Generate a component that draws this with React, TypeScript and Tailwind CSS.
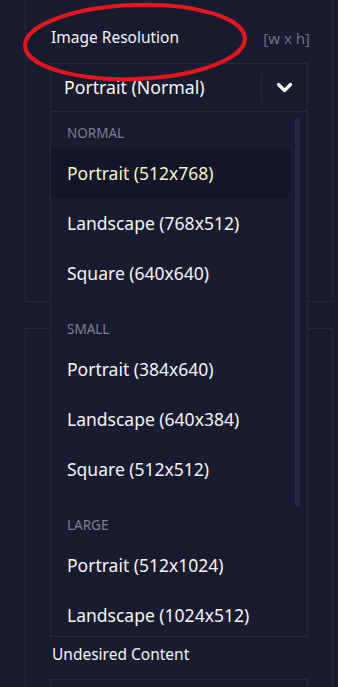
import React from "react";

const groups = [
  { label: "NORMAL", items: ["Portrait (512x768)", "Landscape (768x512)", "Square (640x640)"] },
  { label: "SMALL", items: ["Portrait (384x640)", "Landscape (640x384)", "Square (512x512)"] },
  { label: "LARGE", items: ["Portrait (512x1024)", "Landscape (1024x512)"] },
];

export default function App() {
  return (
    <div
      className="relative w-[338px] h-[687px] overflow-hidden bg-[#191b31] text-white"
      style={{ fontFamily: '"Noto Sans", sans-serif' }}
    >
      {/* Box 1 */}
      <div className="ml-[25px] w-[308px] h-[302px] border-x border-b border-[#262940] px-[24px] pt-[26px]">
        <div className="flex items-center justify-between h-[24px]">
          <span className="text-[15.5px] text-[#f4f4f4] pl-[1px]">Image Resolution</span>
          <span className="text-[15px] text-[#6f7184] -mr-[2px]">[w x h]</span>
        </div>
        <div className="mt-[13px] h-[49px] border border-[#262940] flex items-center">
          <span className="flex-1 pl-[13px] text-[17.7px] text-[#f4f4f4]">Portrait (Normal)</span>
          <div className="w-[1px] h-[27px] bg-[#262940]" />
          <div className="w-[45px] flex items-center justify-center">
            <svg width="17" height="11" viewBox="0 0 17 11">
              <polyline points="2.5,2.5 8.5,8.5 14.5,2.5" fill="none" stroke="#ffffff" strokeWidth="3.2" strokeLinecap="round" strokeLinejoin="round" />
            </svg>
          </div>
        </div>
      </div>

      {/* Box 2 */}
      <div className="mt-[26px] ml-[25px] w-[308px] h-[400px] border-x border-t border-[#262940] px-[24px]">
        <div className="h-[316px]" />
        <div className="h-[20px] flex items-center text-[15.5px] text-[#f4f4f4] pl-[2px]">Undesired Content</div>
        <div className="mt-[14px] h-[60px] border border-[#262940]" />
      </div>

      {/* Dropdown menu */}
      <div className="absolute left-[50px] top-[112px] w-[258px] h-[525px] border-x border-b border-[#262940] bg-[#191b31] overflow-hidden flex">
        <div className="w-[239px]">
          {groups.map((g) => (
            <div key={g.label} className="pb-[10px]">
              <div className="h-[36px] pt-[12px] pl-[16px] text-[13.5px] leading-[18px] text-[#7d7f92]">{g.label}</div>
              {g.items.map((it, i) => (
                <div
                  key={it}
                  className={
                    "h-[50px] flex items-center pl-[16px] text-[17.5px] " +
                    (g.label === "NORMAL" && i === 0 ? "bg-[#13152a] text-[#f5f3c2]" : "text-[#f4f4f4]")
                  }
                >
                  {it}
                </div>
              ))}
            </div>
          ))}
        </div>
        <div className="w-[17px] relative">
          <div className="absolute left-[5px] top-[6px] w-[5px] h-[389px] rounded-full bg-[#262a47]" />
        </div>
      </div>

      {/* Red annotation ellipse */}
      <svg className="absolute left-0 top-0 pointer-events-none" width="338" height="120">
        <ellipse cx="135" cy="42" rx="110" ry="37" transform="rotate(-2 135 42)" fill="none" stroke="#e4161e" strokeWidth="4" />
      </svg>
    </div>
  );
}
